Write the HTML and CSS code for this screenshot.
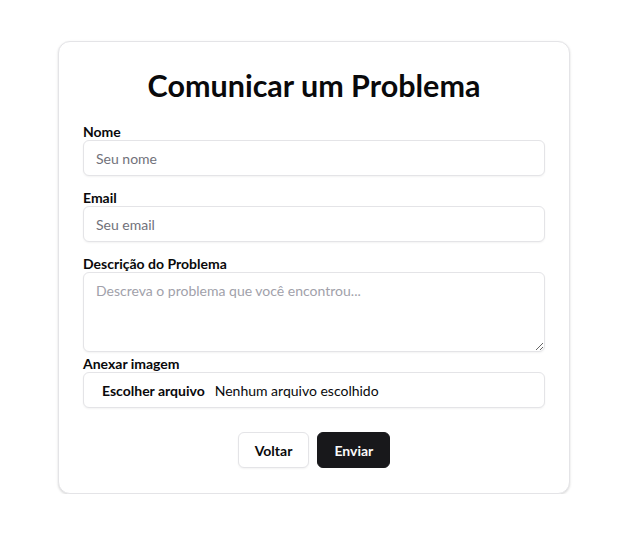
FILE: index.html
```html
<!DOCTYPE html>
<html lang="pt">
<head>
<meta charset="utf-8">
<title>Comunicar um Problema</title>
<link rel="stylesheet" href="styles.css">
</head>
<body>
<div class="page">
  <form class="card">
    <h1 class="title">Comunicar um Problema</h1>
    <div class="field">
      <label class="label" for="nome">Nome</label>
      <input class="input" id="nome" type="text" placeholder="Seu nome">
    </div>
    <div class="field">
      <label class="label" for="email">Email</label>
      <input class="input" id="email" type="email" placeholder="Seu email">
    </div>
    <div class="field field-desc">
      <label class="label" for="desc">Descrição do Problema</label>
      <textarea class="textarea" id="desc" placeholder="Descreva o problema que você encontrou..."></textarea>
    </div>
    <div class="field field-file">
      <label class="label">Anexar imagem</label>
      <div class="file">
        <span class="file-btn">Escolher arquivo</span>
        <span class="file-name">Nenhum arquivo escolhido</span>
      </div>
    </div>
    <div class="actions">
      <button type="button" class="btn btn-outline">Voltar</button>
      <button type="button" class="btn btn-primary">Enviar</button>
    </div>
  </form>
</div>
</body>
</html>
```

FILE: styles.css
```css
* { box-sizing: border-box; }
html, body { margin: 0; padding: 0; background: #ffffff; }
body {
  font-family: Lato, "Noto Sans", sans-serif;
  color: #09090b;
}
.page {
  display: flex;
  justify-content: center;
  padding: 41px 7px 0 0;
}
.card {
  width: 512px;
  background: #ffffff;
  border: 1px solid #e4e4e7;
  border-radius: 12px;
  box-shadow: 0 1px 3px rgba(0,0,0,0.10), 0 1px 2px rgba(0,0,0,0.06);
  padding: 25px 24px 25px;
  display: flex;
  flex-direction: column;
}
.title {
  margin: 0 0 21px;
  font-size: 30.5px;
  line-height: 36px;
  font-weight: 700;
  text-align: center;
}
.field { display: flex; flex-direction: column; margin-bottom: 14px; }
.field-desc { margin-bottom: 4px; }
.field-file { margin-bottom: 24px; }
.label {
  font-size: 14px;
  line-height: 16px;
  font-weight: 700;
}
.input, .textarea, .file {
  width: 100%;
  border: 1px solid #e4e4e7;
  border-radius: 6px;
  background: #fff;
  box-shadow: 0 1px 2px rgba(0,0,0,0.05);
  font-family: inherit;
  font-size: 14px;
  color: #09090b;
}
.input {
  height: 36px;
  padding: 0 12px;
  outline: none;
}
.input::placeholder { color: #71717a; }
.textarea {
  height: 80px;
  padding: 8px 12px;
  line-height: 20px;
  resize: vertical;
  display: block;
}
.textarea::placeholder { color: #a1a1aa; }
.file {
  height: 36px;
  display: flex;
  align-items: center;
  padding: 0 12px 0 18px;
  gap: 10px;
}
.file-btn { font-weight: 700; }
.file-name { color: #09090b; }
.actions {
  display: flex;
  justify-content: center;
  gap: 8px;
}
.btn {
  height: 36px;
  border-radius: 6px;
  font-family: inherit;
  font-size: 14px;
  font-weight: 700;
  padding: 0 16px;
  cursor: pointer;
}
.btn-outline {
  background: #fff;
  color: #09090b;
  border: 1px solid #e4e4e7;
  box-shadow: 0 1px 2px rgba(0,0,0,0.05);
}
.btn-primary {
  background: #18181b;
  color: #fafafa;
  border: 1px solid #18181b;
}
```
